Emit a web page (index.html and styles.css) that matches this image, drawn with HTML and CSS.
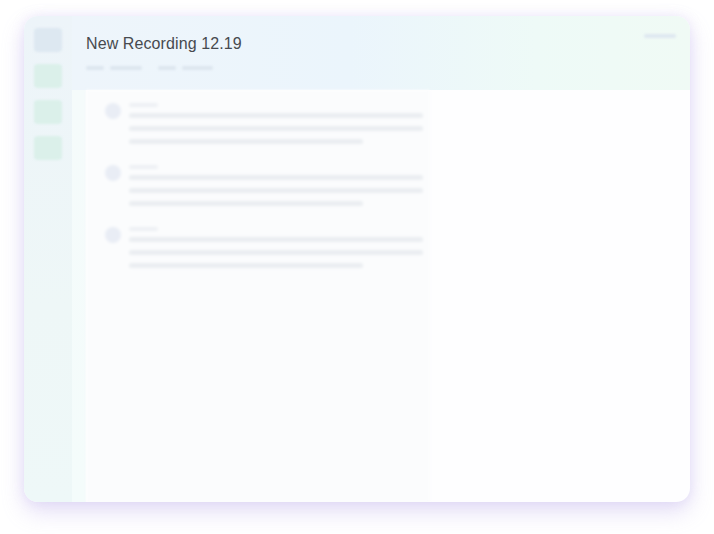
FILE: index.html
```html
<!DOCTYPE html>
<html>
<head>
<meta charset="utf-8">
<link rel="stylesheet" href="styles.css">
</head>
<body>
<div class="stage">
  <div class="card">
    <aside class="sidebar">
      <div class="tile tile-blue"></div>
      <div class="tile tile-green"></div>
      <div class="tile tile-green"></div>
      <div class="tile tile-green"></div>
    </aside>
    <main class="main">
      <header class="header">
        <div class="title-row">
          <h1 class="title">New Recording 12.19</h1>
          <div class="pill"></div>
        </div>
        <div class="meta">
          <span class="bar w18"></span>
          <span class="bar w32"></span>
          <span class="gap"></span>
          <span class="bar w18"></span>
          <span class="bar w31"></span>
        </div>
      </header>
      <section class="body">
        <div class="strip"></div>
        <div class="panel">
          <div class="item">
            <div class="avatar"></div>
            <div class="lines">
              <span class="name"></span>
              <span class="line"></span>
              <span class="line"></span>
              <span class="line short"></span>
            </div>
          </div>
          <div class="item">
            <div class="avatar"></div>
            <div class="lines">
              <span class="name"></span>
              <span class="line"></span>
              <span class="line"></span>
              <span class="line short"></span>
            </div>
          </div>
          <div class="item">
            <div class="avatar"></div>
            <div class="lines">
              <span class="name"></span>
              <span class="line"></span>
              <span class="line"></span>
              <span class="line short"></span>
            </div>
          </div>
        </div>
      </section>
    </main>
  </div>
</div>
</body>
</html>
```

FILE: styles.css
```css
html, body {
  margin: 0;
  padding: 0;
  background: #ffffff;
}
.stage {
  width: 714px;
  height: 534px;
  padding: 16px 24px 0 24px;
  box-sizing: border-box;
}
.card {
  width: 666px;
  height: 486px;
  border-radius: 14px;
  display: flex;
  overflow: hidden;
  background: #fefeff;
  box-shadow: 0 10px 22px rgba(170, 150, 230, 0.30), 0 0 12px rgba(200, 185, 240, 0.25);
}
.sidebar {
  width: 48px;
  flex: none;
  padding: 12px 10px;
  box-sizing: border-box;
  display: flex;
  flex-direction: column;
  gap: 12px;
  background: linear-gradient(180deg, #edf4f9 0%, #eef7f7 60%, #eef8f8 100%);
}
.tile {
  width: 28px;
  height: 24px;
  border-radius: 4px;
  flex: none;
  filter: blur(0.8px);
}
.tile-blue { background: #dde8f1; }
.tile-green { background: #dbf0ea; }
.main {
  flex: 1;
  display: flex;
  flex-direction: column;
  min-width: 0;
}
.header {
  height: 74px;
  box-sizing: border-box;
  padding: 16px 14px 0 14px;
  background: linear-gradient(90deg, #eef5fb 0%, #ebf5fc 45%, #eefaf7 75%, #f0faf5 100%);
}
.title-row {
  display: flex;
  align-items: flex-start;
  justify-content: space-between;
}
.title {
  margin: 0;
  font-family: "Liberation Sans", Arial, sans-serif;
  font-weight: 400;
  font-size: 16px;
  line-height: 24px;
  color: #474a4f;
  letter-spacing: 0.1px;
}
.pill {
  width: 32px;
  height: 4px;
  margin-top: 2px;
  border-radius: 2px;
  background: #dfe8f0;
  filter: blur(1px);
}
.meta {
  display: flex;
  align-items: center;
  gap: 6px;
  margin-top: 10px;
  filter: blur(1px);
}
.meta .bar {
  height: 4px;
  border-radius: 2px;
  background: #dde6ef;
}
.meta .gap { width: 4px; }
.w18 { width: 18px; }
.w32 { width: 32px; }
.w31 { width: 31px; }
.body {
  flex: 1;
  display: flex;
}
.strip {
  width: 14px;
  flex: none;
  background: linear-gradient(180deg, #f5fbfb 0%, #f4fcfb 100%);
}
.panel {
  width: 344px;
  padding: 13px 7px 0 19px;
  box-sizing: border-box;
  background: #fbfcfd;
  display: flex;
  flex-direction: column;
  gap: 21px;
  filter: blur(1.6px);
}
.item {
  display: flex;
  gap: 8px;
}
.avatar {
  width: 16px;
  height: 16px;
  border-radius: 50%;
  background: #e9edf5;
  flex: none;
}
.lines {
  flex: 1;
  display: flex;
  flex-direction: column;
  gap: 8px;
}
.lines span {
  display: block;
  height: 5px;
  border-radius: 3px;
  background: #eaedf1;
}
.lines .name {
  width: 29px;
  height: 4px;
  background: #edf0f4;
  margin-bottom: -2px;
}
.lines .short { width: 234px; }
```
